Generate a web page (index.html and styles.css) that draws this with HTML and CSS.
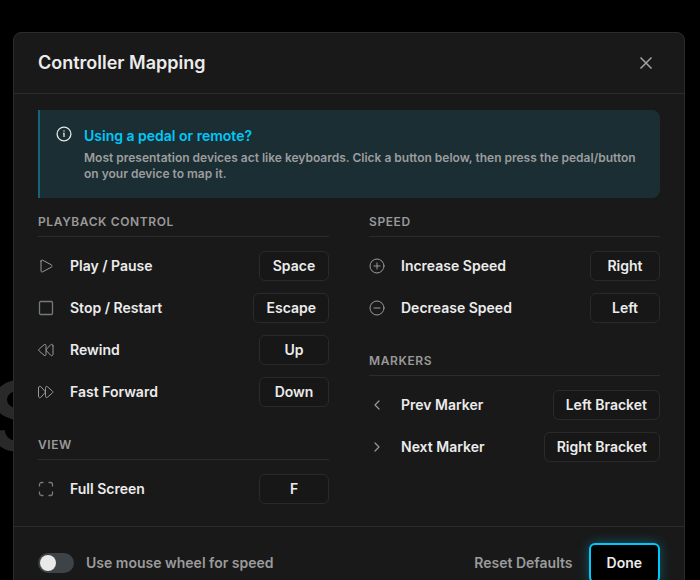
FILE: index.html
```html
<!DOCTYPE html>
<html lang="en">
<head>
<meta charset="utf-8">
<meta name="viewport" content="width=device-width, initial-scale=1">
<title>Controller Mapping</title>
<link rel="stylesheet" href="styles.css">
</head>
<body>
<div class="backdrop-text" aria-hidden="true">S</div>
<main class="dialog" role="dialog" aria-labelledby="title">
  <header class="dialog-header">
    <h1 id="title">Controller Mapping</h1>
    <button class="close" type="button" aria-label="Close">
      <svg width="20" height="20" viewBox="0 0 20 20"><path d="M4.500 4.500l11 11M15.500 4.500l-11 11"/></svg>
    </button>
  </header>
  <div class="dialog-body">
    <section class="banner">
      <svg class="info" width="16" height="16" viewBox="0 0 16 16"><circle cx="8" cy="8" r="6.900"/><path d="M7.100 7.300H8v3.700M7.500 5h1"/></svg>
      <div>
        <h2>Using a pedal or remote?</h2>
        <p>Most presentation devices act like keyboards. Click a button below, then press the pedal/button on your device to map it.</p>
      </div>
    </section>
    <div class="columns">
      <div class="column">
        <section class="group">
          <h3>Playback Control</h3>
          <div class="row">
            <svg class="icon" viewBox="0 0 16 16"><path d="M3 3.100v9.800c0 1 .8 1.300 1.600.9l8.700-4.600c1-.6 1-1.800 0-2.400L4.600 2.200C3.800 1.800 3 2.100 3 3.100z"/></svg>
            <span class="name" id="play">Play / Pause</span>
            <button class="key" type="button" aria-describedby="play">Space</button>
          </div>
          <div class="row">
            <svg class="icon" viewBox="0 0 16 16"><rect class="strong" x="1.500" y="1.500" width="13" height="13" rx="1.200"/></svg>
            <span class="name" id="stop">Stop / Restart</span>
            <button class="key" type="button" aria-describedby="stop">Escape</button>
          </div>
          <div class="row">
            <svg class="icon" viewBox="0 0 16 16"><path d="M8 11.800c0 2-1 2.200-2 1.400L1.300 9.100c-.8-.7-.8-1.500 0-2.200L6 2.800c1-.8 2-.6 2 1.400zM15 3.800v8.400c0 1.500-1.400 2-2.300 1.100L8.800 9.100c-.6-.7-.6-1.500 0-2.200l3.900-4.200c.9-.9 2.300-.4 2.300 1.100z"/></svg>
            <span class="name" id="rewind">Rewind</span>
            <button class="key" type="button" aria-describedby="rewind">Up</button>
          </div>
          <div class="row">
            <svg class="icon" viewBox="0 0 16 16"><path d="M7.500 11.800c0 2 1 2.200 2 1.400l4.700-4.100c.8-.7.8-1.500 0-2.200L9.500 2.800c-1-.8-2-.6-2 1.400zM.5 3.800v8.400c0 1.500 1.400 2 2.300 1.100l3.900-4.200c.6-.7.6-1.500 0-2.200L2.800 2.700C1.900 1.800.5 2.300.5 3.800z"/></svg>
            <span class="name" id="forward">Fast Forward</span>
            <button class="key" type="button" aria-describedby="forward">Down</button>
          </div>
        </section>
        <section class="group">
          <h3>View</h3>
          <div class="row">
            <svg class="icon" viewBox="0 0 16 16"><path class="strong" d="M1.500 5V3.500a2 2 0 0 1 2-2H5M11 1.500h1.500a2 2 0 0 1 2 2V5M14.500 11v1.500a2 2 0 0 1-2 2H11M5 14.500H3.500a2 2 0 0 1-2-2V11"/></svg>
            <span class="name" id="full">Full Screen</span>
            <button class="key" type="button" aria-describedby="full">F</button>
          </div>
        </section>
      </div>
      <div class="column">
        <section class="group">
          <h3>Speed</h3>
          <div class="row">
            <svg class="icon" viewBox="0 0 16 16"><circle cx="8" cy="8" r="7"/><path d="M5 8h6M8 5v6"/></svg>
            <span class="name" id="faster">Increase Speed</span>
            <button class="key" type="button" aria-describedby="faster">Right</button>
          </div>
          <div class="row">
            <svg class="icon" viewBox="0 0 16 16"><circle cx="8" cy="8" r="7"/><path d="M5 8h6"/></svg>
            <span class="name" id="slower">Decrease Speed</span>
            <button class="key" type="button" aria-describedby="slower">Left</button>
          </div>
        </section>
        <section class="group">
          <h3>Markers</h3>
          <div class="row">
            <svg class="icon" viewBox="0 0 16 16"><path class="chevron" d="M10 4L6 8l4 4"/></svg>
            <span class="name" id="prev">Prev Marker</span>
            <button class="key" type="button" aria-describedby="prev">Left Bracket</button>
          </div>
          <div class="row">
            <svg class="icon" viewBox="0 0 16 16"><path class="chevron" d="M6 4l4 4-4 4"/></svg>
            <span class="name" id="next">Next Marker</span>
            <button class="key" type="button" aria-describedby="next">Right Bracket</button>
          </div>
        </section>
      </div>
    </div>
  </div>
  <footer class="dialog-footer">
    <label class="switch"><input type="checkbox" role="switch">Use mouse wheel for speed</label>
    <button class="reset" type="button">Reset Defaults</button>
    <button class="done" type="button">Done</button>
  </footer>
</main>
</body>
</html>
```
FILE: styles.css
```css
* {
  box-sizing: border-box;
}

html {
  background: #000;
}

body {
  margin: 0;
  height: 100vh;
  overflow: hidden;
  background: #000;
  color: #ececec;
  font-family: Inter, "Liberation Sans", sans-serif;
  font-size: 14px;
  font-weight: 600;
  line-height: 20px;
}

h1, h2, h3, p {
  margin: 0;
}

button {
  font: inherit;
  color: inherit;
  cursor: pointer;
}

svg {
  flex: none;
  fill: none;
  stroke: currentColor;
}

.backdrop-text {
  position: absolute;
  left: -12px;
  top: 368px;
  color: #292929;
  font-size: 96px;
  line-height: 96px;
}

.dialog {
  position: relative;
  margin: 32px 15px 0 13px;
  border: 1px solid #2c2c2c;
  border-radius: 8px;
  background: #191919;
}

.dialog-header {
  display: flex;
  align-items: center;
  justify-content: space-between;
  padding: 16px 24px;
  border-bottom: 1px solid #2c2c2c;
}

h1 {
  font-size: 18px;
  font-weight: 600;
  line-height: 28px;
}

.close {
  display: grid;
  place-items: center;
  width: 28px;
  height: 28px;
  padding: 0;
  border: 0;
  background: none;
  color: #a3a3a3;
}

.close svg {
  stroke-width: 1.5;
}

.dialog-body {
  padding: 16px 24px 22px;
}

.banner {
  display: flex;
  gap: 12px;
  padding: 16px;
  border-left: 2px solid #12667a;
  border-radius: 0 8px 8px 0;
  background: #1a2e34;
}

.info {
  color: #e6e6e6;
  stroke-width: 1.3;
}

h2 {
  margin-bottom: 4px;
  color: #00c8fa;
  font-size: 14px;
  font-weight: 600;
  line-height: 20px;
}

.banner p {
  color: #9d9d9d;
  font-size: 12px;
  line-height: 16px;
}

.columns {
  display: grid;
  grid-template-columns: 1fr 1fr;
  gap: 40px;
  margin-top: 16px;
}

.column {
  display: flex;
  flex-direction: column;
  gap: 30px;
}

.group {
  display: grid;
  gap: 12px;
}

h3 {
  margin-bottom: 2px;
  padding-bottom: 6px;
  border-bottom: 1px solid #2c2c2c;
  color: #999;
  font-size: 12px;
  font-weight: 600;
  line-height: 16px;
  letter-spacing: 0.05em;
  text-transform: uppercase;
}

.row {
  display: flex;
  align-items: center;
  gap: 16px;
}

.icon {
  width: 16px;
  height: 16px;
  color: #969b99;
  stroke-linecap: round;
  stroke-linejoin: round;
}

.strong {
  stroke: #747a7a;
  stroke-width: 1.3;
}

.chevron {
  stroke-width: 1.2;
}

.name {
  flex: 1;
}

.key {
  min-width: 70px;
  height: 30px;
  padding: 0 12px;
  border: 1px solid #2a2a2a;
  border-radius: 6px;
  background: #171717;
}

.dialog-footer {
  display: flex;
  align-items: center;
  gap: 16px;
  padding: 16px 24px;
  border-top: 1px solid #2c2c2c;
}

.switch {
  display: flex;
  align-items: center;
  gap: 12px;
  margin-right: auto;
  color: #9b9b9b;
}

.switch input {
  display: flex;
  align-items: center;
  width: 36px;
  height: 20px;
  margin: 0;
  padding: 2px;
  border-radius: 10px;
  background: #3d4346;
  appearance: none;
}

.switch input::before {
  content: "";
  width: 16px;
  height: 16px;
  border-radius: 50%;
  background: #e9e9e9;
}

.switch input:checked::before {
  margin-left: auto;
}

.reset {
  padding: 0;
  border: 0;
  background: none;
  color: #9b9b9b;
}

.done {
  height: 40px;
  padding: 0 16px;
  border: 2px solid #00c8fa;
  border-radius: 6px;
  background: #000;
  box-shadow: 0 0 12px rgba(0, 200, 250, 0.35);
}
```
